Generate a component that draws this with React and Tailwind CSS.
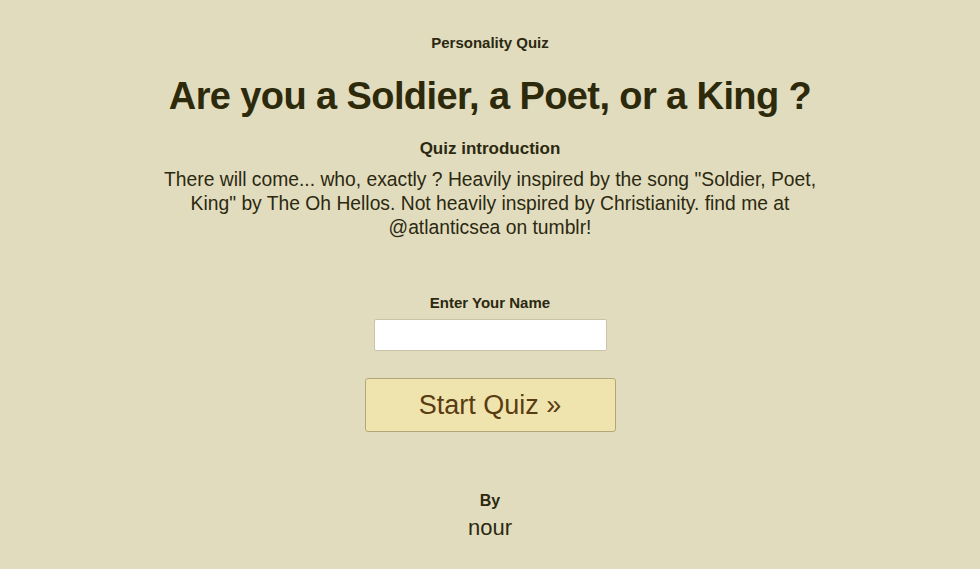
import React from "react";

export default function App() {
  return (
    <div
      className="min-h-[569px] w-full bg-[#e2dcbf] text-[#2b2910] flex flex-col items-center"
      style={{ fontFamily: '"Liberation Sans", Arial, sans-serif' }}
    >
      <div className="pt-[34px] text-[15px] font-bold leading-[18px]">Personality Quiz</div>

      <h1 className="mt-[21px] text-[38px] font-bold leading-[46px] tracking-[-0.6px] text-[#2d2a0c]">
        Are you a Soldier, a Poet, or a King ?
      </h1>

      <div className="mt-[20px] text-[17px] font-bold leading-[20px]">Quiz introduction</div>

      <p className="mt-[9px] w-[668px] text-center text-[19.3px] leading-[24px]">
        There will come... who, exactly ? Heavily inspired by the song "Soldier, Poet, King" by The Oh
        Hellos. Not heavily inspired by Christianity. find me at @atlanticsea on tumblr!
      </p>

      <label className="mt-[54px] text-[15px] font-bold leading-[18px]">Enter Your Name</label>
      <input
        type="text"
        className="mt-[7px] h-[32px] w-[233px] rounded-[2px] border border-[#c9c3a8] bg-white px-2 outline-none"
      />

      <button className="mt-[27px] h-[54px] w-[251px] rounded-[3px] border border-[#b3a77a] bg-[#f0e4ae] text-[27px] leading-[30px] text-[#5a3c12]">
        Start Quiz »
      </button>

      <div className="mt-[60px] text-[16px] font-bold leading-[18px]">By</div>
      <div className="mt-[6px] text-[22px] leading-[24px]">nour</div>
    </div>
  );
}
